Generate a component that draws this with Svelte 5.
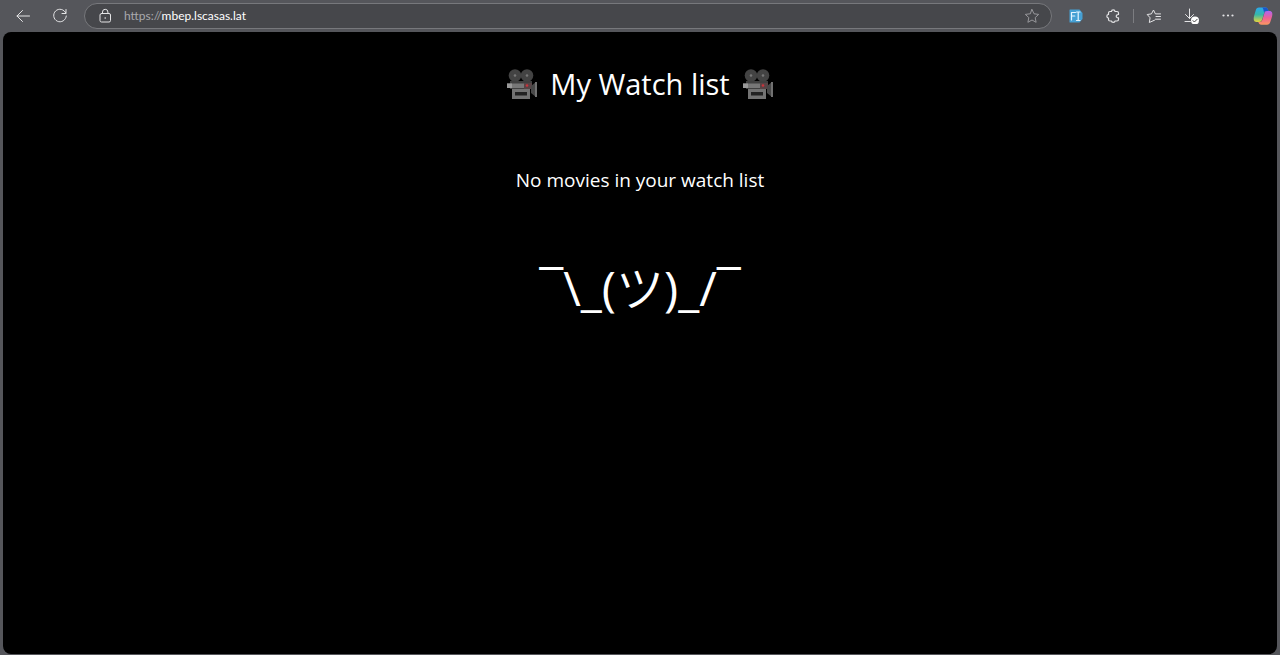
<script>
  const address = { scheme: 'https://', host: 'mbep.lscasas.lat' };
</script>

{#snippet camera()}
  <svg class="camera" viewBox="0 0 32 32" role="img" aria-label="Movie camera">
    <circle cx="9" cy="7.500" r="6.300" fill="#434343" />
    <circle cx="21" cy="7.500" r="6.300" fill="#434343" />
    <circle cx="9" cy="7.500" r="1.300" fill="#777" />
    <circle cx="21" cy="7.500" r="1.300" fill="#777" />
    <path d="M4 13h22v8H4z" fill="#404040" />
    <rect x="1" y="15.500" width="17" height="4.500" fill="#777" />
    <path d="M1 15.500h5V20H1z" fill="#999" />
    <rect x="18" y="15" width="8" height="6" fill="#574446" />
    <circle cx="21" cy="17.500" r="1.300" fill="#c9343c" />
    <path d="M25 18l5-4v15l-5-4z" fill="#484848" />
    <path d="M29 14h2v15h-2z" fill="#707070" />
    <path d="M6 21h18v10H6z" fill="#737373" />
    <path d="M9 24h12v3.500H9z" fill="#222" />
  </svg>
{/snippet}

<div class="browser">
  <header class="toolbar">
    <button aria-label="Back">
      <svg viewBox="0 0 16 16"><path d="M14.500 8H2M7.500 2.500L2 8l5.500 5.500" /></svg>
    </button>
    <button aria-label="Refresh">
      <svg viewBox="0 0 16 16"><path d="M13.800 5A6.300 6.300 0 1 0 14.300 8M14 1.500V5.500H10" /></svg>
    </button>
    <div class="address">
      <button aria-label="Site information">
        <svg viewBox="0 0 16 16"><rect x="3" y="5.500" width="10.500" height="8.500" rx="1.500" /><path d="M5.500 5.500V4a2.700 2.700 0 0 1 5.400 0v1.500" /><circle cx="8.200" cy="10" r=".8" fill="currentColor" stroke="none" /></svg>
      </button>
      <a href="https://mbep.lscasas.lat"><span>{address.scheme}</span>{address.host}</a>
      <button class="favorite" aria-label="Add to favorites">
        <svg viewBox="0 0 16 16"><path d="M8 1.500l2 4.300 4.700.6-3.500 3.200.9 4.700L8 12l-4.100 2.300.9-4.700L1.300 6.400 6 5.800z" /></svg>
      </button>
    </div>
    <div class="actions">
      <button aria-label="Font inspector">
        <svg class="filled" viewBox="0 0 16 16"><path d="M2 1.500h9.500L14.500 5v6l-3 3.500H2a.5.5 0 0 1-.5-.5V2a.5.5 0 0 1 .5-.5z" fill="#46a0d4" /><path d="M3.500 12V4.500h4M3.500 8h3.300M8.500 4h3.500M8.500 12.500h3.500M10.200 4v8.500" fill="none" stroke="#e4f4ff" stroke-width="1.200" /></svg>
      </button>
      <button aria-label="Extensions">
        <svg viewBox="0 0 16 16" stroke-width="1.200"><path d="M5 3.500h1.500C6.500 1.300 10 1.300 10 3.500h2a1.500 1.500 0 0 1 1.500 1.500v1.500c-3-.1-3 3.500 0 3.400V11.500a1.500 1.500 0 0 1-1.500 1.500H10c0 1.800-3.500 1.800-3.500 0H5a1.500 1.500 0 0 1-1.500-1.500V10C1.300 10 1.300 6.500 3.500 6.500V5A1.500 1.500 0 0 1 5 3.500z" /></svg>
      </button>
      <span class="divider"></span>
      <button aria-label="Favorites">
        <svg viewBox="0 0 16 16"><path d="M8.500 12.200L3.300 14.500l.8-4.700L1.200 6.500l4.200-.6L7.500 2l1.900 3.900h5.100M10 8.500h4.500M9.500 11.200h5" /></svg>
      </button>
      <button aria-label="Downloads">
        <svg viewBox="0 0 16 16"><path d="M6.500 1v9.500M2.500 6.500l4 4 4-4M2 13.500h5.500" /><circle cx="12" cy="12.500" r="4" fill="#fff" stroke="none" /><path d="M10 12.600l1.400 1.400 2.700-2.700" stroke="#444" /></svg>
      </button>
      <button aria-label="Settings and more">
        <svg class="filled" viewBox="0 0 16 16"><g fill="currentColor"><circle cx="3.500" cy="7.500" r="1.100" /><circle cx="8" cy="7.500" r="1.100" /><circle cx="12.500" cy="7.500" r="1.100" /></g></svg>
      </button>
      <button class="copilot" aria-label="Copilot">
        <svg class="filled" viewBox="0 0 20 20">
          <defs>
            <linearGradient id="cool" x1="0" y1="0" x2="0" y2="1"><stop stop-color="#2ba9ee" /><stop offset=".5" stop-color="#37b8a8" /><stop offset="1" stop-color="#e6d43b" /></linearGradient>
            <linearGradient id="warm" x1="0" y1="0" x2="0" y2="1"><stop stop-color="#ae65f1" /><stop offset=".5" stop-color="#ee6195" /><stop offset="1" stop-color="#fa9860" /></linearGradient>
          </defs>
          <path d="M6 1.500h6.500c2 0 2.500 2 3 3.500h-2c-1.500 0-2 1-2.500 2.500l-1.500 5C8.800 15 8 16 6 16H3.500C.5 16 .3 12.500 1.200 9.500l1.500-5C3.400 2.300 4 1.500 6 1.500z" fill="url(#cool)" />
          <path d="M9 1.500h3.500c2 0 2.500 2 3 3.500h-2c-1.500 0-2 .5-2.500 1.500C10.500 4.500 10.500 2 9 1.500z" fill="#1a55cc" />
          <path d="M14 5h2.500c3 0 3.300 3.200 2.400 6l-1.600 5c-.7 2-1.600 2.700-3.300 2.700H8.500c-2 0-2.700-1.200-3.200-2.700H7c1.500 0 2-1 2.500-2.500l1.800-6C11.800 5.800 12.500 5 14 5z" fill="url(#warm)" />
        </svg>
      </button>
    </div>
  </header>

  <main>
    <h1>{@render camera()}<span>My Watch list</span>{@render camera()}</h1>
    <p class="message">No movies in your watch list</p>
    <p class="shrug">¯\_(<span>ツ</span>)_/¯</p>
  </main>
</div>

<style>
  :global(body) { margin: 0; background: #55565b; }
  .browser {
    box-sizing: border-box;
    min-height: 100vh;
    display: flex;
    flex-direction: column;
    padding: 0 3px 1px;
    background: #55565b;
    color: #fff;
    font-family: "Open Sans", "Noto Sans CJK JP", sans-serif;
  }
  .toolbar { display: flex; align-items: center; height: 32px; padding-left: 12px; }
  button {
    display: flex;
    flex: none;
    width: 16px;
    height: 16px;
    margin: 0;
    padding: 0;
    border: 0;
    background: none;
    color: #e4e4e6;
  }
  button svg { width: 100%; height: 100%; }
  svg { fill: none; stroke: currentColor; stroke-linejoin: round; stroke-linecap: round; }
  .filled { stroke: none; }
  .toolbar > button { margin-right: 21px; }
  .toolbar > button + button { margin-right: 16px; }
  .address {
    box-sizing: border-box;
    display: flex;
    flex: 1;
    align-items: center;
    height: 26px;
    padding: 0 11px 0 12px;
    border: 1px solid #77787c;
    border-radius: 13px;
    background: #46474b;
  }
  a { flex: 1; margin-left: 11px; color: #fff; font: 12px/16px Lato, sans-serif; text-decoration: none; }
  a span { color: #a9a9ad; }
  .favorite { color: #97979b; }
  .actions { display: flex; align-items: center; gap: 21px; margin-left: 16px; padding-right: 4px; }
  .divider { width: 1px; height: 14px; margin: 0 -9px; background: #7c7d81; }
  .copilot { width: 20px; height: 20px; margin-left: -4px; }
  main {
    flex: 1;
    display: flex;
    flex-direction: column;
    align-items: center;
    padding-top: 32px;
    border-radius: 8px;
    background: #000;
  }
  h1, p { margin: 0; font-weight: 400; }
  h1 { display: flex; align-items: center; gap: 12px; font-size: 29px; line-height: 40px; }
  .camera { width: 32px; height: 32px; stroke: none; }
  .message { margin-top: 60px; font-size: 19px; line-height: 32px; }
  .shrug { margin-top: 56px; font-size: 48px; line-height: 72px; }
  .shrug span { font-weight: 350; }
</style>
